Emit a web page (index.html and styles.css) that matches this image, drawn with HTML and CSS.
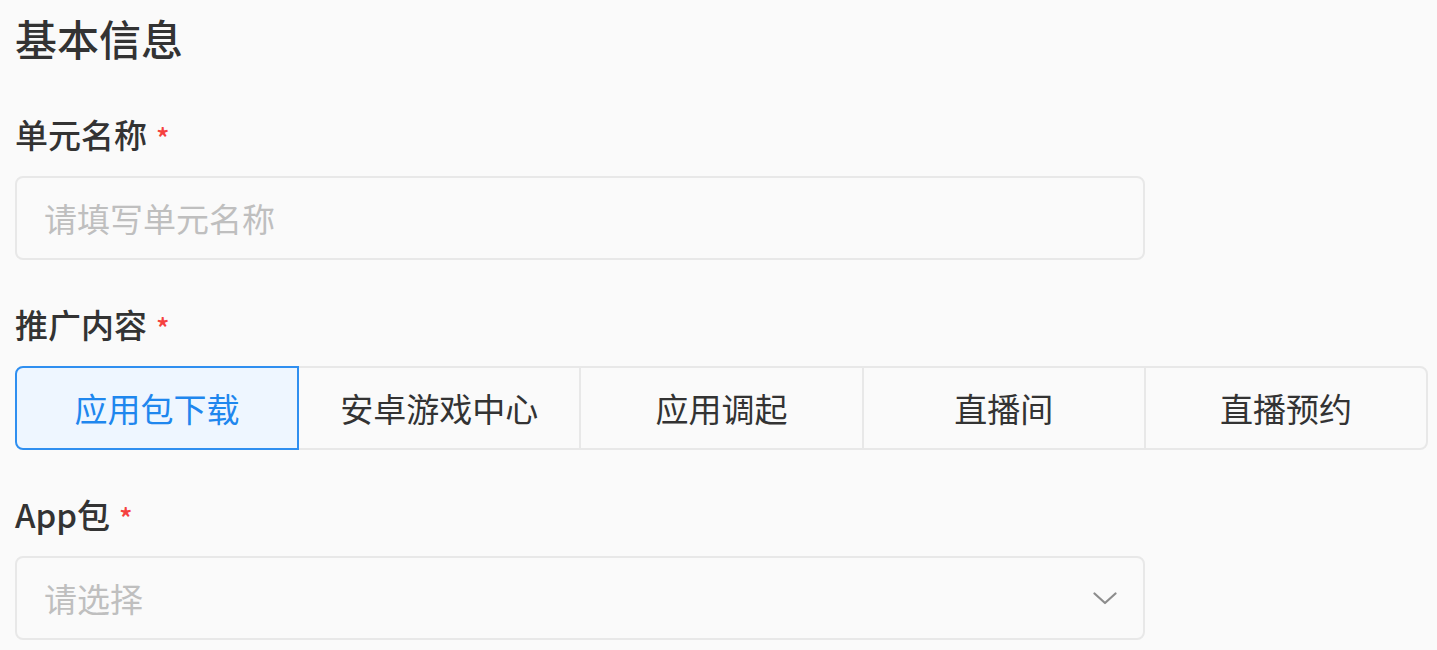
FILE: index.html
```html
<!DOCTYPE html>
<html lang="zh-CN">
<head>
<meta charset="utf-8">
<title>基本信息</title>
<link rel="stylesheet" href="styles.css">
</head>
<body>
<div class="page">
  <h1 class="title">基本信息</h1>

  <div class="field">
    <div class="label">单元名称<span class="req">*</span></div>
    <div class="input"><span class="placeholder">请填写单元名称</span></div>
  </div>

  <div class="field">
    <div class="label">推广内容<span class="req">*</span></div>
    <div class="segments">
      <div class="seg active">应用包下载</div>
      <div class="seg">安卓游戏中心</div>
      <div class="seg">应用调起</div>
      <div class="seg">直播间</div>
      <div class="seg">直播预约</div>
    </div>
  </div>

  <div class="field">
    <div class="label">App包<span class="req">*</span></div>
    <div class="input select">
      <span class="placeholder">请选择</span>
      <svg class="chevron" width="24" height="13" viewBox="0 0 24 13"><polyline points="1.5,1.5 12,11 22.5,1.5" fill="none" stroke="#8c8c8c" stroke-width="2.2" stroke-linecap="round" stroke-linejoin="round"/></svg>
    </div>
  </div>
</div>
</body>
</html>
```

FILE: styles.css
```css
html, body {
  margin: 0;
  padding: 0;
  background: #fafafa;
}
body {
  font-family: "Noto Sans CJK SC", "Noto Sans", sans-serif;
  color: #333;
}
.page {
  padding: 9px 9px 0 15px;
}
.title {
  margin: 0;
  font-size: 42px;
  line-height: 58px;
  font-weight: 500;
  color: #333;
}
.field {
  margin-top: 45px;
}
.field + .field {
  margin-top: 42px;
}
.label {
  font-size: 33px;
  line-height: 44px;
  font-weight: 500;
  color: #333;
  margin-bottom: 20px;
  display: flex;
  align-items: center;
}
.req {
  color: #f5413f;
  font-size: 28px;
  margin-left: 9px;
  line-height: 1;
  padding-top: 6px;
}
.input {
  width: 1130px;
  height: 84px;
  box-sizing: border-box;
  border: 2px solid #e8e8e8;
  border-radius: 8px;
  background: #fafafa;
  display: flex;
  align-items: center;
  padding: 0 28px 0 27px;
}
.placeholder {
  font-size: 33px;
  color: #bfbfbf;
}
.select {
  justify-content: space-between;
}
.chevron {
  display: block;
  margin-right: -2px;
}
.segments {
  display: flex;
  width: 1413px;
  height: 84px;
}
.seg {
  flex: 1;
  box-sizing: border-box;
  border: 2px solid #e8e8e8;
  margin-left: -2px;
  display: flex;
  align-items: center;
  justify-content: center;
  font-size: 33px;
  color: #333;
  background: #fafafa;
}
.seg:first-child {
  margin-left: 0;
  border-radius: 8px 0 0 8px;
}
.seg:last-child {
  border-radius: 0 8px 8px 0;
}
.seg.active {
  position: relative;
  z-index: 1;
  border-color: #2f8ff0;
  background: #eef6ff;
  color: #1f87ee;
}
```
